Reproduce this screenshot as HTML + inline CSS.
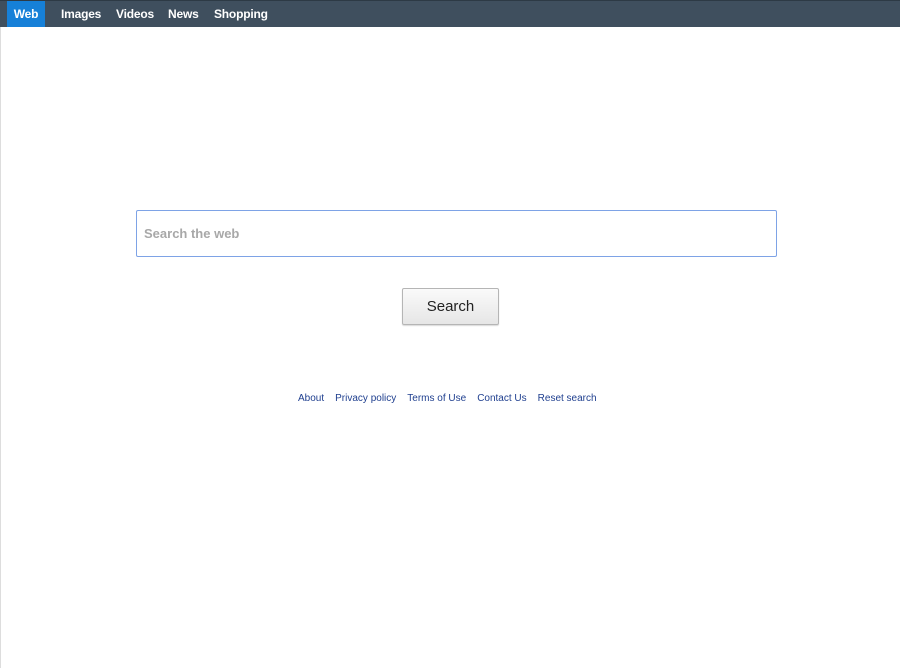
<!DOCTYPE html>
<html><head><style>
body{margin:0;width:900px;height:668px;background:#fff;font-family:"Liberation Sans",Arial,sans-serif;position:relative;overflow:hidden}
.edge{position:absolute;left:0;top:0;width:1px;height:668px;background:#ddd}
.nav{position:absolute;left:0;top:0;width:900px;height:27px;background:#3f4f5e;border-top:1px solid #2d3a45;box-sizing:border-box}
.nav a{position:absolute;top:0;height:26px;line-height:27px;color:#fff;font-size:12px;font-weight:bold;text-decoration:none;letter-spacing:-0.2px}
.web{background:#1680d8;left:7px;width:38px;text-align:center}
.box{position:absolute;left:136px;top:210px;width:641px;height:47px;border:1px solid #7ea3e6;box-sizing:border-box;border-radius:2px}
.box span{position:absolute;left:7px;top:15px;font-size:13px;font-weight:bold;color:#a8a8a8}
.btn{position:absolute;left:402px;top:288px;width:97px;height:37px;box-sizing:border-box;border:1px solid #b5b5b5;border-radius:2px;background:linear-gradient(#fafafa,#e6e6e6);box-shadow:0 1px 1px rgba(0,0,0,.15);text-align:center;line-height:35px;font-size:15px;color:#222}
.foot{position:absolute;top:393px;left:298px;font-size:10px;color:#1f3f8f;white-space:nowrap}
.foot span{margin-right:11px}
</style></head><body>
<div class="edge"></div>
<div class="nav">
<a class="web">Web</a>
<a style="left:61px">Images</a>
<a style="left:116px">Videos</a>
<a style="left:168px">News</a>
<a style="left:214px">Shopping</a>
</div>
<div class="box"><span>Search the web</span></div>
<div class="btn">Search</div>
<div class="foot"><span>About</span><span>Privacy policy</span><span>Terms of Use</span><span>Contact Us</span><span>Reset search</span></div>
</body></html>
